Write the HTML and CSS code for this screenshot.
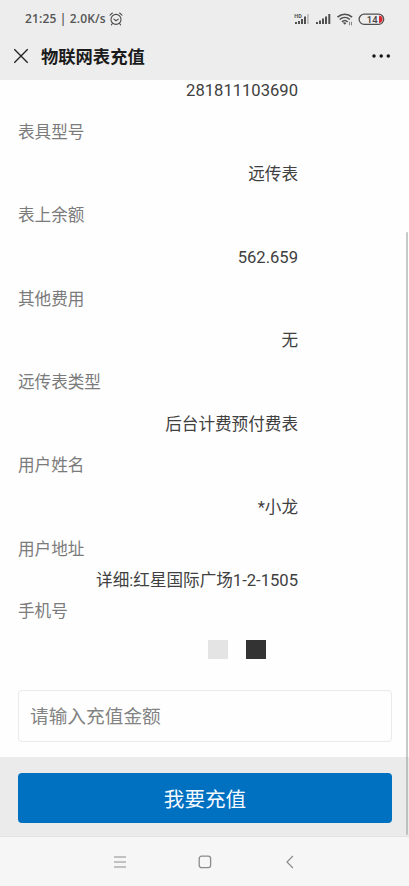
FILE: index.html
```html
<!DOCTYPE html>
<html lang="zh-CN">
<head>
<meta charset="utf-8">
<meta name="viewport" content="width=device-width, initial-scale=1">
<title>物联网表充值</title>
<link rel="stylesheet" href="styles.css">
</head>
<body>
<div class="screen">
  <header class="top">
    <div class="status">
      <span class="clock">21:25 | 2.0K/s</span>
      <svg class="alarm" width="14" height="14" viewBox="0 0 14 14" fill="none" stroke="#4c4c4c" stroke-width="1.1" stroke-linecap="round">
        <circle cx="7" cy="7.4" r="5"/><path d="M1 3.2 3.4 1M13 3.2 10.6 1M3.4 11.5 2.4 12.8M10.6 11.5l1 1.3M4.9 7.1 7 8.8l2.4-1.7"/>
      </svg>
      <svg class="indicators" width="92" height="18" viewBox="0 0 92 18">
        <g fill="#505050">
          <path d="M2 13h2v2H2zM5 12h2v3H5zM8 10h2v5H8zM11 7.5h2V15h-2z"/>
          <path fill="#bdbdbd" d="M14 5h1.8v10H14z"/>
          <path d="M23 13h2v2h-2zM26 11.5h2V15h-2zM29 9.5h2V15h-2zM32 7.5h2V15h-2zM35.3 5h2v10h-2z"/>
        </g>
        <text class="hd" x="1.3" y="8.8">HD</text>
        <g fill="none" stroke="#505050" stroke-width="1.6">
          <path d="M44.5 8.1c4.3-3.9 10.3-3.9 14.6 0M46.7 10.5c3-2.7 7.2-2.7 10.2 0M48.9 12.8c1.7-1.5 4.1-1.5 5.8 0"/>
        </g>
        <path d="m49.9 13.8 1.9 2 1.6-1.8c-1-.8-2.4-.9-3.5-.2z" fill="#505050"/>
        <path d="M56.5 16.3v-3.5M58.5 12.8v3.5" stroke="#777" stroke-width=".9"/>
        <rect x="66.1" y="5.2" width="24.6" height="10.2" rx="5.1" fill="none" stroke="#505050" stroke-width="1.3"/>
        <path d="M86 6.7h1c1.8.5 2.6 1.9 2.6 3.6s-.8 3.1-2.6 3.6h-1z" fill="#d92c32"/>
        <text class="charge" x="73.8" y="13.5">14</text>
      </svg>
    </div>
    <div class="title-bar">
      <svg width="16" height="16" viewBox="0 0 16 16" fill="none" stroke="#202020" stroke-width="1.3"><path d="m1.3 1.2 13.4 13.6M14.7 1.2 1.3 14.8"/></svg>
      <h1 class="title">物联网表充值</h1>
      <svg class="more" width="20" height="6" viewBox="0 0 20 6" fill="#161616"><circle cx="3" cy="3" r="1.75"/><circle cx="10.2" cy="3" r="1.75"/><circle cx="17.3" cy="3" r="1.75"/></svg>
    </div>
  </header>
  <main class="content">
    <dl class="details">
      <dd class="first">281811103690</dd>
      <dt>表具型号</dt><dd>远传表</dd>
      <dt>表上余额</dt><dd>562.659</dd>
      <dt>其他费用</dt><dd>无</dd>
      <dt>远传表类型</dt><dd>后台计费预付费表</dd>
      <dt>用户姓名</dt><dd>*小龙</dd>
      <dt>用户地址</dt><dd class="address">详细:红星国际广场1-2-1505</dd>
      <dt>手机号</dt><dd class="phone"><span class="block light"></span><span class="block dark"></span></dd>
    </dl>
    <input class="amount" type="text" placeholder="请输入充值金额">
  </main>
  <footer class="action"><button class="submit">我要充值</button></footer>
  <nav class="system-nav">
    <svg width="14" height="14" viewBox="0 0 14 14" stroke="#8b8b8b" stroke-width="1.1"><path d="M1 2h12M1 7h12M1 12h12"/></svg>
    <svg width="14" height="14" viewBox="0 0 14 14" fill="none" stroke="#8b8b8b" stroke-width="1.3"><rect x="1.2" y="1.2" width="11.4" height="11.4" rx="2.3"/></svg>
    <svg width="14" height="14" viewBox="0 0 14 14" fill="none" stroke="#8b8b8b" stroke-width="1.2"><path d="M10.9 1 5 7l5.9 6"/></svg>
  </nav>
  <div class="scrollbar"></div>
</div>
</body>
</html>
```

FILE: styles.css
```css
* { box-sizing: border-box; }
body { margin: 0; font-family: Roboto, "Noto Sans CJK SC", sans-serif; }
.screen {
  position: relative;
  display: flex;
  flex-direction: column;
  height: 886px;
  overflow: hidden;
  background: #fefefe;
}
.top { height: 80px; background: #ededed; padding-top: 9px; flex: none; }
.status { display: flex; align-items: center; height: 20px; padding: 0 24px 0 25px; }
.clock {
  font: 600 12px/20px "Open Sans", sans-serif;
  letter-spacing: .15px;
  color: #555;
  white-space: nowrap;
}
.alarm { margin-left: 3px; }
.indicators { margin: -2px 0 0 auto; }
.hd { font: 700 5.5px Roboto, sans-serif; fill: #505050; }
.charge { font: 500 9.5px Roboto, sans-serif; fill: #444; }
.title-bar { display: flex; align-items: center; height: 54px; padding: 0 18px 0 13px; }
.title {
  margin: 1px 0 0 12px;
  font-size: 17.3px;
  line-height: 26px;
  font-weight: 700;
  color: #1b1b1b;
}
.more { margin-left: auto; }
.content { height: 677px; flex: none; padding: 0 17px 0 18px; }
.details { height: 610px; margin: 0; font-size: 16.6px; line-height: 41.67px; }
.details dt { height: 41.67px; color: #7b7b7b; }
.details dd { height: 41.67px; margin: 0; width: 280px; text-align: right; color: #404040; }
.details .first { height: 32.1px; line-height: 21px; }
.details .address { height: 21px; line-height: 21px; }
.details .phone { display: flex; justify-content: flex-end; gap: 18px; padding: 6.9px 32px 0 0; }
.block { width: 20px; height: 19px; }
.light { background: #e4e4e4; }
.dark { background: #333; }
.amount {
  display: block;
  width: 374px;
  height: 52px;
  padding: 2px 11px 0;
  border: 1px solid #eaeaea;
  border-radius: 4px;
  background: transparent;
  font: 18.7px Roboto, "Noto Sans CJK SC", sans-serif;
}
.amount::placeholder { color: #838383; opacity: 1; }
.action { height: 80px; padding: 16px 17px 0 18px; background: #ebebeb; border-bottom: 1px solid #e2e2e2; flex: none; }
.submit {
  display: block;
  width: 100%;
  height: 50px;
  padding: 0;
  border: 0;
  border-radius: 4px;
  background: #0070c1;
  color: #f5faff;
  font: 20.6px Roboto, "Noto Sans CJK SC", sans-serif;
}
.system-nav { display: flex; flex: 1; gap: 70.5px; align-items: center; padding-left: 113px; background: #f6f6f6; }
.scrollbar { position: absolute; top: 232px; right: 1px; width: 2px; height: 603px; border-radius: 1px; background: rgba(140, 150, 150, .5); }
```
